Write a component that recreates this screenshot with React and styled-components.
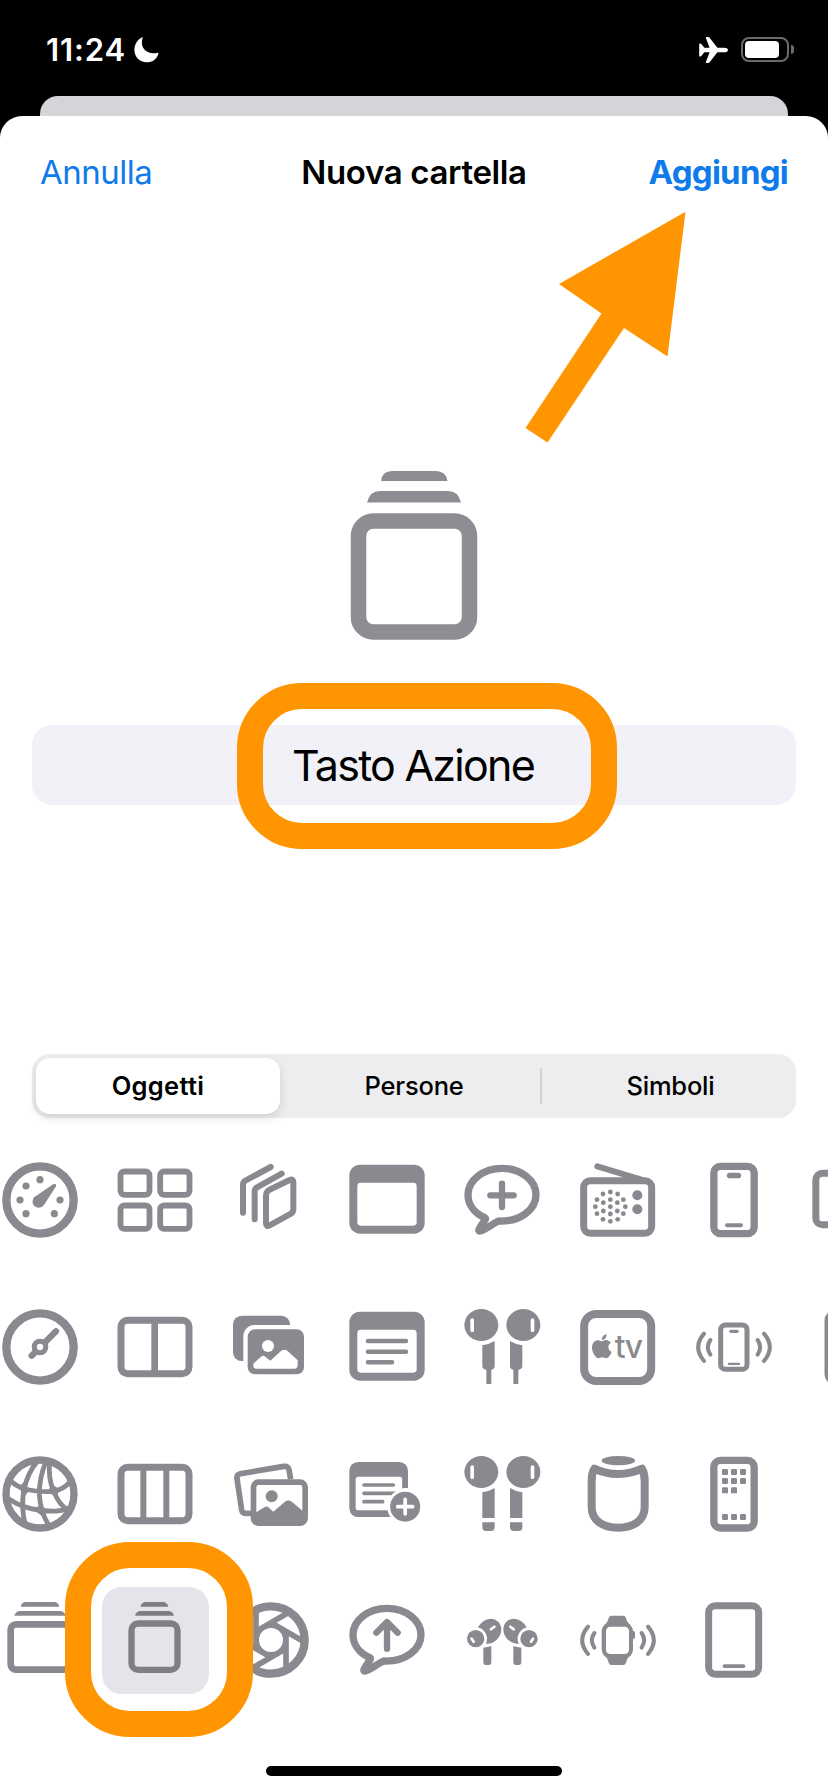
import { useState } from "react";
import styled, { createGlobalStyle, css } from "styled-components";

const GlobalStyle = createGlobalStyle`
    * {
        box-sizing: border-box;
    }

    body {
        margin: 0;
        background-color: #000;
        font-family: Inter, 'Liberation Sans', sans-serif;
    }
`

/* Every glyph is drawn round 0,0 on a 240 unit box */

const Bubble = ({ children }) => (
    <g fill="none" stroke="currentColor" strokeLinejoin="round" strokeLinecap="round">
        <path
            strokeWidth="22"
            d="M-10 63 C-28 71 -50 89 -66 93 C-76 94 -63 78 -50 58 C-49 55 -51 53 -56 51 C-84 37 -102 12 -102 -16 A102 79 0 0 1 102 -16 C102 28 55 66 -10 63Z"
        />
        {children}
    </g>
)

const Waves = () => (
    <path
        d="M-71 -21 Q-86 1 -71 23 M-90 -40 Q-125 1 -90 42 M71 -21 Q86 1 71 23 M90 -40 Q125 1 90 42"
        fill="none"
        stroke="currentColor"
        strokeWidth="12"
        strokeLinecap="round"
    />
)

const Frame = ({ x, y, w, h, r = 20, s = 21, fill = "none" }) => (
    <rect x={x} y={y} width={w} height={h} rx={r} fill={fill} stroke="currentColor" strokeWidth={s} />
)

const WindowFrame = () => (
    <>
        <rect x="-113" y="-106" width="226" height="207" rx="32" />
        <rect x="-89" y="-52" width="178" height="129" rx="10" fill="#fff" />
    </>
)

const Earbud = ({ children }) => (
    <>
        <ellipse cx="-62" cy="-66" rx="51" ry="48" />
        <rect x="-95" y="-86" width="11" height="41" rx="5.5" fill="#fff" />
        {children}
    </>
)

const EarpodSide = () => (
    <Earbud>
        <path d="M-59 -5 Q-38 -8 -22 -18 V58 Q-22 66 -32 69 V111 H-47 V69 Q-59 66 -59 58Z" />
    </Earbud>
)

const AirpodSide = () => (
    <Earbud>
        <path d="M-59 -5 Q-38 -8 -22 -18 V72 H-59Z M-59 85 H-22 V100 Q-22 111 -33 111 H-48 Q-59 111 -59 100Z" />
    </Earbud>
)

const AirpodProSide = () => (
    <>
        <ellipse cx="-39" cy="-26" rx="40" ry="34" transform="rotate(-48 -39 -26)" />
        <circle cx="-79" cy="-4" r="34" fill="#fff" />
        <circle cx="-79" cy="-4" r="26" />
        <path
            d="M-33 -32 L-23 -40 M-91 -4 L-85 5"
            stroke="#fff"
            strokeWidth="8"
            strokeLinecap="round"
        />
        <path d="M-56 23 Q-44 22 -32 18 V66 Q-32 75 -40 75 H-48 Q-56 75 -56 66Z" />
    </>
)

const Mirrored = ({ Side }) => (
    <>
        <Side />
        <g transform="translate(2 0) scale(-1 1)"><Side /></g>
    </>
)

const speakerDots = [
    [0, -44], [0, -21], [0, 0], [0, 22], [0, 44], [-22, -38], [22, -38], [-40, -21], [39, -21],
    [-21, -12], [21, -12], [-45, 0], [45, 0], [-21, 13], [21, 13], [-40, 21], [39, 21], [-22, 38], [22, 38],
];

const appCells = [
    [-36, -75], [-9, -75], [18, -75], [-36, -48], [-9, -48], [18, -48], [-36, -20], [-9, -20],
    [-36, 60], [-9, 60], [18, 60],
];

const glyphs = {
    gauge: (
        <>
            <circle r="101" fill="none" stroke="currentColor" strokeWidth="25" />
            {[[0, -61], [-42, -42], [-60, 0], [-42, 41], [43, 41], [60, 0]].map(([x, y]) => (
                <circle key={`${x}${y}`} cx={x} cy={y} r="10.8" />
            ))}
            <circle cx="-4" cy="5" r="18.5" />
            <path d="M-17 -8 L39 -47 Q50 -52 48 -41 L12 15Z" />
        </>
    ),
    grid: (
        <>
            <Frame x={-103.5} y={-85.5} w={87} h={70} r={12} s={17.5} />
            <Frame x={15.5} y={-85.5} w={88} h={70} r={12} s={17.5} />
            <Frame x={-103.5} y={16.5} w={87} h={70} r={12} s={17.5} />
            <Frame x={15.5} y={16.5} w={88} h={70} r={12} s={17.5} />
        </>
    ),
    stack3d: (
        <path
            d="M-15 -12 Q-15 -25 -6 -30 L56 -60 Q67 -64 67 -54 L67 28 Q67 37 60 41 L-4 76 Q-15 82 -15 70Z M-49 58 V-26 Q-49 -34 -42 -38 L32 -79 M-84 38 V-46 Q-84 -54 -77 -58 L-1 -99"
            fill="none"
            stroke="currentColor"
            strokeWidth="18"
            strokeLinecap="round"
            strokeLinejoin="round"
        />
    ),
    window: <WindowFrame />,
    bubblePlus: <Bubble><path d="M-35 -14 H35 M0 -49 V21" strokeWidth="19" /></Bubble>,
    radio: (
        <>
            <Frame x={-103} y={-57.5} w={204} h={157} />
            <path d="M-62 -101 L70 -61" stroke="currentColor" strokeWidth="18" strokeLinecap="round" />
            <circle cx="58" cy="-14" r="15" />
            <circle cx="58" cy="28" r="15" />
            {speakerDots.map(([x, y]) => <circle key={`${x}_${y}`} cx={x - 23} cy={y + 20} r="7.2" />)}
        </>
    ),
    phone: (
        <>
            <Frame x={-60.5} y={-101} w={121} h={202} s={22} />
            <rect x="-21.5" y="-82" width="43" height="17" rx="8.5" />
            <rect x="-27" y="70" width="54" height="12" rx="6" />
        </>
    ),
    phoneLandscape: <Frame x={-102.5} y={-80.5} w={205} h={155} />,
    dial: (
        <>
            <circle r="101" fill="none" stroke="currentColor" strokeWidth="25" />
            <path d="M-25 26 L48 -47" stroke="currentColor" strokeWidth="19" strokeLinecap="round" />
            <circle r="25" />
            <circle r="9.5" fill="#fff" />
        </>
    ),
    split: (
        <>
            <Frame x={-102} y={-80} w={204} h={160} />
            <rect x="-11" y="-80" width="20" height="160" />
        </>
    ),
    photosFilled: (
        <>
            <rect x="-114" y="-94" width="171" height="136" rx="26" />
            <rect x="-83" y="-66" width="200" height="160" rx="34" fill="#fff" />
            <rect x="-70" y="-53" width="169" height="135" rx="22" />
            <circle cx="-9" cy="-3" r="18" fill="#fff" />
            <path
                d="M-53 50 L-30 29 Q-24 24 -17 29 L-2 41 L30 12 Q40 5 50 12 L80 40 V54 Q80 65 70 65 H-43 Q-53 65 -53 56Z"
                fill="#fff"
            />
        </>
    ),
    note: (
        <>
            <WindowFrame />
            <path
                d="M-57 -18 H57 M-57 14 H57 M-57 46 H15"
                stroke="currentColor"
                strokeWidth="13.5"
                strokeLinecap="round"
            />
        </>
    ),
    earpods: <Mirrored Side={EarpodSide} />,
    tv: (
        <>
            <Frame x={-101.5} y={-99} w={201} h={201} r={36} s={24} />
            <path
                transform="translate(-84.5 -38) scale(3)"
                d="M12.152 6.896c-.948 0-2.415-1.078-3.96-1.04-2.04.027-3.91 1.183-4.961 3.014-2.117 3.675-.546 9.103 1.519 12.09 1.013 1.454 2.208 3.09 3.792 3.039 1.52-.065 2.09-.987 3.935-.987 1.831 0 2.35.987 3.96.948 1.637-.026 2.676-1.48 3.676-2.948 1.156-1.688 1.636-3.325 1.662-3.415-.039-.013-3.182-1.221-3.22-4.857-.026-3.04 2.48-4.494 2.597-4.559-1.429-2.09-3.623-2.324-4.39-2.376-2-.156-3.675 1.09-4.61 1.09zM15.53 3.83c.843-1.012 1.4-2.427 1.245-3.83-1.207.052-2.662.805-3.532 1.818-.78.896-1.454 2.338-1.273 3.714 1.338.104 2.715-.688 3.559-1.701"
            />
            <text x="-10" y="32" fontSize="95" fontWeight="500" textLength="85">tv</text>
        </>
    ),
    phoneWaves: (
        <>
            <Frame x={-40} y={-66} w={79} h={133} r={14} s={15} />
            <rect x="-14" y="-52" width="28" height="10" rx="5" />
            <rect x="-18.5" y="47" width="37" height="7" rx="3.5" />
            <Waves />
        </>
    ),
    tablet: <Frame x={-66} y={-100} w={132} h={202} />,
    globe: (
        <g fill="none" stroke="currentColor">
            <circle r="102" strokeWidth="22" />
            <path
                strokeWidth="14.5"
                d="M-94 -43 Q-72 -24 -48 -15 Q0 -4 41 -8 Q70 -14 88 -34 M-98 12 Q-75 28 -48 38 Q0 53 50 51 Q80 48 98 38 M-8 -98 Q-36 -65 -48 -15 Q-58 40 -44 92 M18 -98 Q-2 -50 -2 0 Q0 50 24 90 M29 -97 Q24 -45 41 -9 Q58 35 84 47"
            />
            <path
                fill="currentColor"
                stroke="none"
                d="M-64 -22 L-45 -38 L-32 -11 L-48 10Z M22 -8 L36 -28 L60 -14 L48 10Z M-20 46 L2 32 L24 50 L10 70Z"
            />
        </g>
    ),
    columns: (
        <>
            <Frame x={-102} y={-80} w={204} h={160} />
            <rect x="-44" y="-80" width="18" height="160" />
            <rect x="25" y="-80" width="18" height="160" />
        </>
    ),
    photos: (
        <>
            <path
                d="M-60 58 H-76 Q-86 58 -88 48 L-102 -46 Q-104 -58 -92 -61 L38 -83 Q51 -85 54 -73 L59 -44"
                fill="none"
                stroke="currentColor"
                strokeWidth="17"
            />
            <Frame x={-52.5} y={-35.5} w={155} h={123} r={15} s={17} fill="#fff" />
            <circle cx="2" cy="7" r="18" />
            <path d="M-48 57 L-20 40 Q-14 35 -8 40 L7 53 L42 23 Q52 16 62 23 L100 55 V88 H-50Z" />
        </>
    ),
    notePlus: (
        <>
            <rect x="-113" y="-96" width="176" height="165" rx="26" />
            <rect x="-94" y="-52" width="140" height="101" rx="8" fill="#fff" />
            <path
                d="M-69 -27 H19 M-69 -2 H25 M-69 23 H-13"
                stroke="currentColor"
                strokeWidth="11"
                strokeLinecap="round"
            />
            <path d="M48 -18 H70 V80 H6Z" fill="#fff" />
            <circle cx="54.5" cy="38" r="54" fill="#fff" />
            <path d="M46 -52 H63 V-18 H46Z" />
            <circle cx="54.5" cy="38" r="45" />
            <path d="M32 38 H77 M54.5 16 V60" stroke="#fff" strokeWidth="11" strokeLinecap="round" />
        </>
    ),
    airpods: <Mirrored Side={AirpodSide} />,
    speaker: (
        <>
            <ellipse cx="1" cy="-100" rx="50" ry="14" />
            <path
                d="M-71 -76 Q-38 -60 .5 -60 Q38 -60 72 -76 Q80 -62 80 -40 V40 C80 80 45 101 .5 101 C-45 101 -79 80 -79 40 V-40 Q-79 -62 -71 -76Z"
                fill="none"
                stroke="currentColor"
                strokeWidth="24"
                strokeLinejoin="round"
            />
        </>
    ),
    phoneApps: (
        <>
            <Frame x={-60.5} y={-101} w={121} h={203} s={22} />
            {appCells.map(([x, y]) => (
                <rect key={`${x}_${y}`} x={x} y={y} width="18" height="18" rx="3.5" />
            ))}
        </>
    ),
    stack: (
        <>
            <Frame x={-88} y={-47} w={176} h={136} r={16} s={20} />
            <path d="M-77 -73 Q-72 -87 -60 -87 H60 Q72 -87 77 -73Z M-58 -100 Q-55 -114 -42 -114 H42 Q55 -114 58 -100Z" />
        </>
    ),
    stackPortrait: (
        <>
            <Frame x={-70.5} y={-49.5} w={138} h={139} r={20} s={19} />
            <path d="M-60 -73 Q-56 -87 -43 -87 H40 Q53 -87 57 -73Z M-44 -100 Q-40 -114 -28 -114 H24 Q36 -114 40 -100Z" />
        </>
    ),
    aperture: (
        <>
            <circle r="101" fill="none" stroke="currentColor" strokeWidth="25" />
            {[0, 60, 120, 180, 240, 300].map((angle) => (
                <path
                    key={angle}
                    d="M45 -26 V90"
                    stroke="currentColor"
                    strokeWidth="17"
                    transform={`rotate(${angle})`}
                />
            ))}
            <path d="M45 -26 V26 L0 52 L-45 26 V-26 L0 -52Z" />
            <circle r="36" fill="#fff" />
        </>
    ),
    bubbleArrow: <Bubble><path d="M0 26 V-53 M-32 -22 L0 -54 L32 -22" strokeWidth="19" /></Bubble>,
    airpodsPro: <Mirrored Side={AirpodProSide} />,
    watchWaves: (
        <>
            <rect x="-49" y="-53" width="94" height="108" rx="27" />
            <path d="M-20 -73 H16 Q22 -73 24 -66 Q28 -50 38 -44 H-42 Q-32 -50 -28 -66 Q-26 -73 -20 -73Z M-20 75 H16 Q22 75 24 68 Q28 52 38 46 H-42 Q-32 52 -28 68 Q-26 75 -20 75Z" />
            <rect x="-36" y="-40" width="69" height="82" rx="13" fill="#fff" />
            <rect x="40" y="-27" width="11" height="24" rx="5" />
            <Waves />
        </>
    ),
    ipad: (
        <>
            <Frame x={-76} y={-102.5} w={150} h={205} />
            <rect x="-34" y="73" width="68" height="11" rx="5" />
        </>
    ),
};

const iconRows = [
    ["gauge", "grid", "stack3d", "window", "bubblePlus", "radio", "phone", "phoneLandscape"],
    ["dial", "split", "photosFilled", "note", "earpods", "tv", "phoneWaves", "tablet"],
    ["globe", "columns", "photos", "notePlus", "airpods", "speaker", "phoneApps", null],
    ["stack", "stackPortrait", "aperture", "bubbleArrow", "airpodsPro", "watchWaves", "ipad", null],
];

const tabs = ["Oggetti", "Persone", "Simboli"];

const App = () => {

    const [tab, setTab] = useState("Oggetti");
    const [selected, setSelected] = useState("stackPortrait");

    return (
        <Screen>
            <GlobalStyle />
            <StatusBar>
                <StatusGroup>
                    <Time>11:24</Time>
                    <svg width="25" height="26" viewBox="0 0 25 26" fill="#fff">
                        <path d="M8.8 .7 C5.6 8.500 10.500 18 23 15.900 Q24.900 15.400 24.300 17.200 C22.500 22.300 18.200 25.300 12.800 25.300 C5.800 25.300 .4 20 .4 13 C.4 7.200 3.300 2.700 7.800 .4 Q9.200 -.2 8.800 .7Z" />
                    </svg>
                </StatusGroup>
                <StatusGroup>
                    <svg width="30" height="28" viewBox="0 0 30 28" fill="#fff">
                        <path d="M29 14 C29 15.500 27.200 16.300 25 16.300 H18.400 L10.600 26.200 Q10 26.900 9 26.900 H7.400 Q6.500 26.900 6.900 25.900 L10.600 16.300 H5.400 L2.300 20 Q1.900 20.500 1.300 20.500 H.9 Q.2 20.500 .2 19.800 V8.200 Q.2 7.500 .9 7.500 H1.300 Q1.900 7.500 2.300 8 L5.400 11.700 H10.600 L6.900 2.100 Q6.500 1.100 7.400 1.100 H9 Q10 1.100 10.600 1.800 L18.400 11.700 H25 C27.200 11.700 29 12.500 29 14Z" />
                    </svg>
                    <Battery><Charge /></Battery>
                </StatusGroup>
            </StatusBar>
            <BackCard />
            <Sheet>
                <Header>
                    <HeaderButton>Annulla</HeaderButton>
                    <HeaderTitle>Nuova cartella</HeaderTitle>
                    <HeaderButton $primary>Aggiungi</HeaderButton>
                </Header>
                <Arrow width="162" height="233" viewBox="0 0 162 233">
                    <path d="M160.500 1.700 L34 74 L76.500 103.500 L.500 218 L22.500 232.500 L99 118 L142.500 146.500Z" fill="#ff9500" />
                </Arrow>

                <Preview width="128" height="169" viewBox="0 0 128 169">
                    <rect x="8.500" y="50" width="111" height="111" rx="15" fill="none" stroke="currentColor" strokeWidth="15.500" />
                    <path d="M17 31.500 Q19.500 20 30 20 H98 Q108.500 20 111 31.500Z M31 10 Q32 0 42 0 H86 Q96 0 97.500 10Z" />
                </Preview>

                <NameField>
                    Tasto Azione
                    <FieldHighlight />
                </NameField>

                <Segments>
                    {tabs.map((name) => (
                        <Segment key={name} $active={name === tab} onClick={() => setTab(name)}>{name}</Segment>
                    ))}
                </Segments>

                <IconGrid>
                    {iconRows.flat().map((name, index) => (
                        <IconCell key={index} $selected={name === selected} onClick={() => name && setSelected(name)}>
                            {name && <Glyph viewBox="-120 -120 240 240">{glyphs[name]}</Glyph>}
                            {name === "stackPortrait" && <CellHighlight />}
                        </IconCell>
                    ))}
                </IconGrid>

                <HomeIndicator />
            </Sheet>
        </Screen>
    )
}

export default App

const Screen = styled.main`
    width: 828px;
    height: 1792px;
    overflow: hidden;
    display: flex;
    flex-direction: column;
    background-color: #000;
`

const StatusBar = styled.div`
    display: flex;
    justify-content: space-between;
    align-items: center;
    height: 96px;
    padding: 3px 38px 0 46px;
    color: #fff;
`

const StatusGroup = styled.div`
    display: flex;
    align-items: center;
    gap: 12px;
`

const Time = styled.span`
    font-size: 31px;
    font-weight: 600;
    letter-spacing: 0.9px;
    margin-right: -4px;
`

const Battery = styled.div`
    width: 48px;
    height: 25px;
    padding: 2px;
    border: 2px solid #6b6b6b;
    border-radius: 8px;
    position: relative;
    margin-right: 1px;

    &::after {
        content: '';
        position: absolute;
        right: -7px;
        top: 6px;
        width: 3px;
        height: 9px;
        background-color: #6b6b6b;
        border-radius: 0 3px 3px 0;
    }
`

const Charge = styled.div`
    width: 34px;
    height: 100%;
    border-radius: 4px;
    background-color: #fff;
`

const BackCard = styled.div`
    height: 20px;
    margin: 0 40px;
    background-color: #d5d4d9;
    border-radius: 18px 18px 0 0;
`

const Sheet = styled.section`
    flex: 1;
    display: flex;
    flex-direction: column;
    align-items: center;
    position: relative;
    overflow: hidden;
    background-color: #fff;
    border-radius: 22px 22px 0 0;
`

const Header = styled.header`
    width: 100%;
    height: 112px;
    padding: 0 40px;
    display: grid;
    grid-template-columns: 1fr auto 1fr;
    align-items: center;
`

const HeaderTitle = styled.h1`
    margin: 0;
    font-size: 33px;
    font-weight: 600;
    letter-spacing: -0.35px;
`

const HeaderButton = styled.button`
    justify-self: start;
    padding: 0;
    border: none;
    background: none;
    font-family: inherit;
    font-size: 33px;
    letter-spacing: -0.5px;
    color: #0f7bea;
    ${props => props.$primary && css`
        justify-self: end;
        font-weight: 700;
        letter-spacing: -0.75px;
    `}
`

const Arrow = styled.svg`
    position: absolute;
    left: 525px;
    top: 94px;
`

const Preview = styled.svg`
    margin-top: 243px;
    color: #8e8d94;
    fill: currentColor;
`

const NameField = styled.div`
    width: 764px;
    height: 80px;
    margin-top: 85px;
    padding-right: 2px;
    display: flex;
    align-items: center;
    justify-content: center;
    position: relative;
    border-radius: 20px;
    background-color: #f2f1f7;
    font-size: 43px;
    letter-spacing: -1.75px;
`

const Highlight = styled.div`
    position: absolute;
    z-index: 1;
    border: 26px solid #ff9500;
    border-radius: 65px;
    pointer-events: none;
`

const FieldHighlight = styled(Highlight)`
    left: 205px;
    top: -42px;
    width: 380px;
    height: 166px;
`

const Segments = styled.div`
    width: 764px;
    height: 64px;
    margin-top: 249px;
    padding: 4px 3px 4px 4px;
    display: grid;
    grid-template-columns: 244px 262px 1fr;
    border-radius: 18px;
    background-color: #ededef;
`

const Segment = styled.button`
    border: none;
    padding: 0 0 2px 6px;
    background: none;
    font-family: inherit;
    font-size: 25.5px;
    font-weight: 500;
    letter-spacing: -0.2px;
    color: #000;
    position: relative;

    &:last-child::before {
        content: '';
        position: absolute;
        left: -2px;
        top: 10px;
        width: 2px;
        height: 36px;
        background-color: #d3d3d6;
    }

    ${props => props.$active && css`
        padding-left: 0;
        background-color: #fff;
        font-weight: 600;
        letter-spacing: 0.3px;
        border-radius: 14px;
        box-shadow: 0 4px 10px rgba(0, 0, 0, 0.12);
    `}
`

const IconGrid = styled.div`
    align-self: flex-start;
    margin-left: -13.8px;
    margin-top: 28.6px;
    display: grid;
    grid-template-columns: repeat(8, 107px);
    grid-auto-rows: 107px;
    gap: 39.75px 8.7px;
`

const IconCell = styled.div`
    display: flex;
    align-items: center;
    justify-content: center;
    position: relative;
    border-radius: 20px;
    color: #8a898f;
    ${props => props.$selected && css`
        background-color: #e5e4ea;
        color: #7f7e85;
    `}
`

const Glyph = styled.svg`
    width: 80px;
    height: 80px;
    fill: currentColor;
`

const CellHighlight = styled(Highlight)`
    left: -37px;
    top: -44.9px;
    width: 188px;
    height: 195px;
`

const HomeIndicator = styled.div`
    width: 296px;
    height: 10px;
    margin-top: auto;
    margin-bottom: 16px;
    border-radius: 5px;
    background-color: #000;
`
